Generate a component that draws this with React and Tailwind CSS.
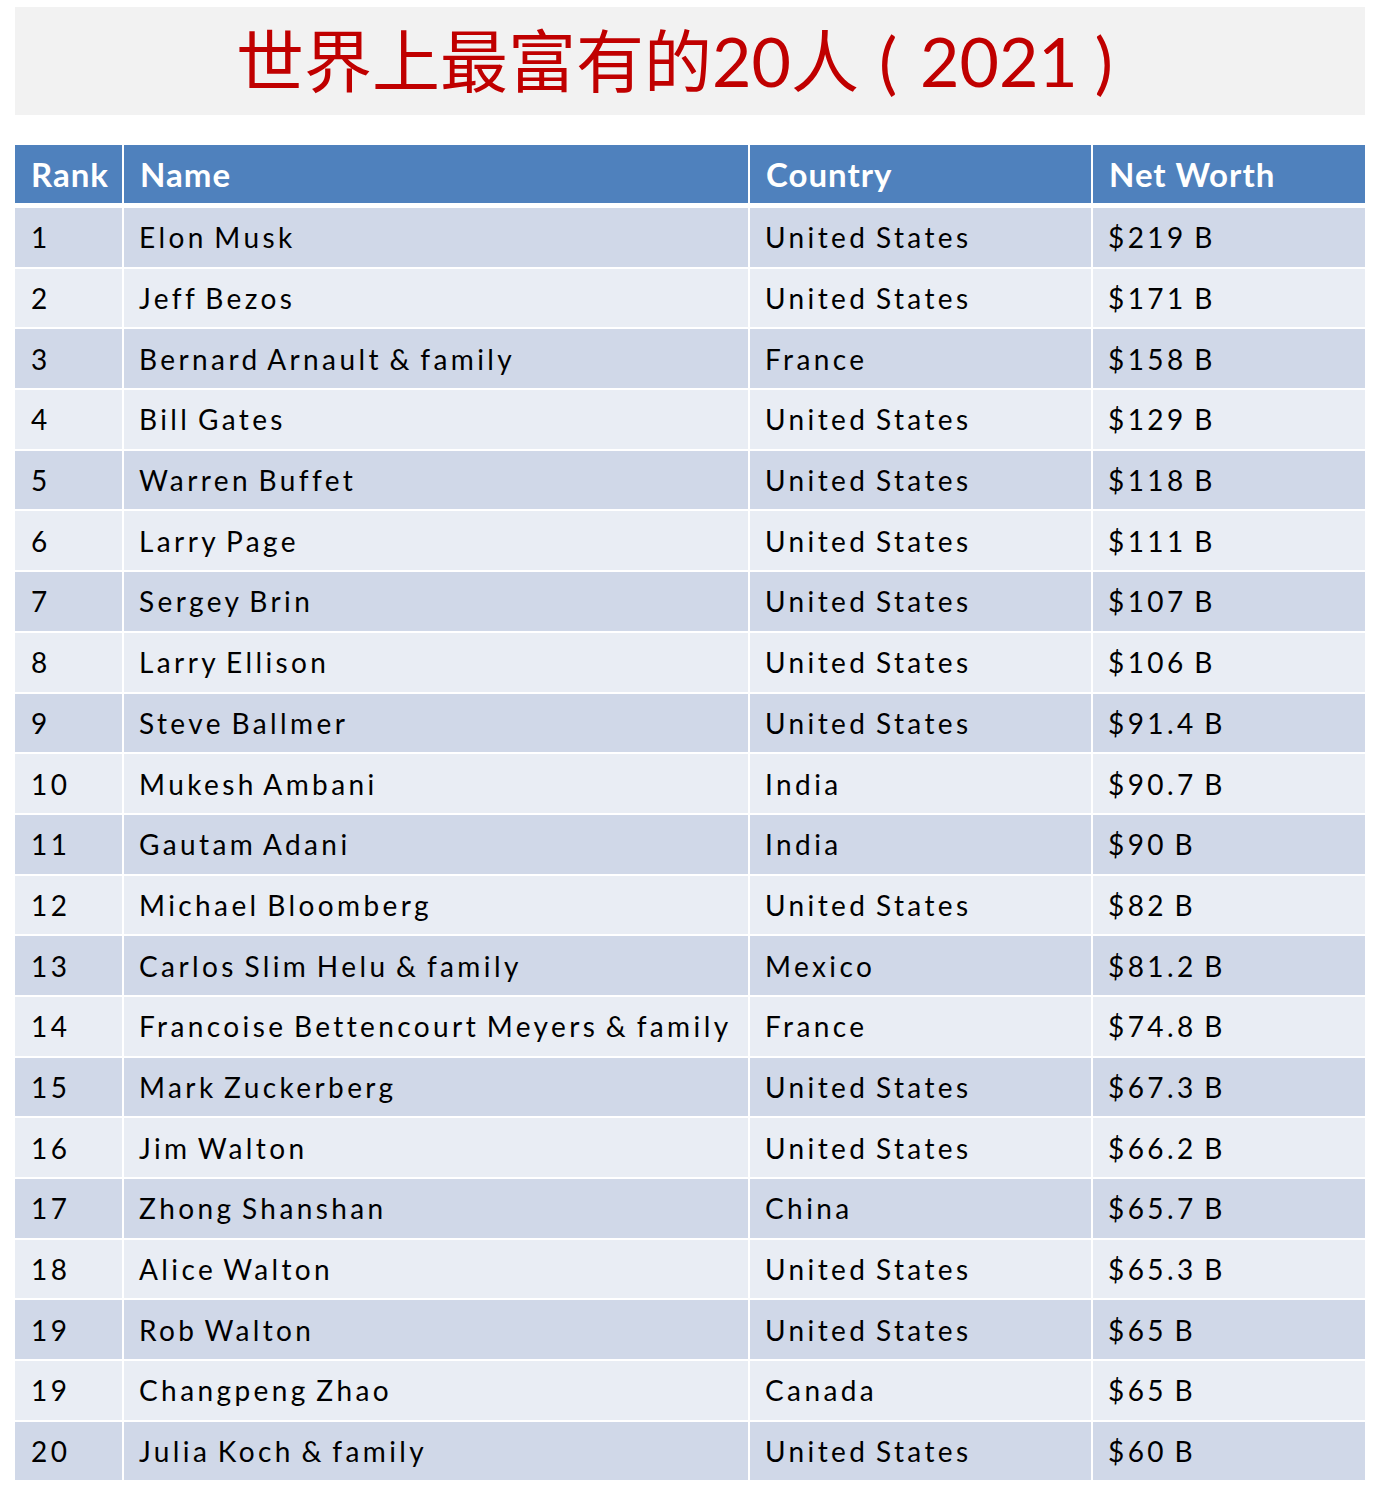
import React from "react";

const rows = [
  ["1", "Elon Musk", "United States", "$219 B"],
  ["2", "Jeff Bezos", "United States", "$171 B"],
  ["3", "Bernard Arnault & family", "France", "$158 B"],
  ["4", "Bill Gates", "United States", "$129 B"],
  ["5", "Warren Buffet", "United States", "$118 B"],
  ["6", "Larry Page", "United States", "$111 B"],
  ["7", "Sergey Brin", "United States", "$107 B"],
  ["8", "Larry Ellison", "United States", "$106 B"],
  ["9", "Steve Ballmer", "United States", "$91.4 B"],
  ["10", "Mukesh Ambani", "India", "$90.7 B"],
  ["11", "Gautam Adani", "India", "$90 B"],
  ["12", "Michael Bloomberg", "United States", "$82 B"],
  ["13", "Carlos Slim Helu & family", "Mexico", "$81.2 B"],
  ["14", "Francoise Bettencourt Meyers & family", "France", "$74.8 B"],
  ["15", "Mark Zuckerberg", "United States", "$67.3 B"],
  ["16", "Jim Walton", "United States", "$66.2 B"],
  ["17", "Zhong Shanshan", "China", "$65.7 B"],
  ["18", "Alice Walton", "United States", "$65.3 B"],
  ["19", "Rob Walton", "United States", "$65 B"],
  ["19", "Changpeng Zhao", "Canada", "$65 B"],
  ["20", "Julia Koch & family", "United States", "$60 B"],
];

const cols = "grid grid-cols-[107px_624px_341px_272px] gap-x-[2px]";

export default function App() {
  return (
    <div className="w-[1380px] h-[1498px] bg-white pt-[7px] px-[15px] font-['Lato','Noto_Sans_CJK_SC',sans-serif]">
      {/* Title */}
      <div className="h-[108px] bg-[#f2f2f2] flex items-center pl-[221px]">
        <h1 className="text-[#c00000] text-[68px] leading-none font-normal whitespace-nowrap">
          世界上最富有的20人
          <span className="ml-[20px]">(</span>
          <span className="ml-[23px]">2021</span>
          <span className="ml-[17px]">)</span>
        </h1>
      </div>

      {/* Table */}
      <div className="mt-[30px]">
        <div className={`${cols} h-[58px] mb-[5px]`}>
          {["Rank", "Name", "Country", "Net Worth"].map((h) => (
            <div key={h} className="bg-[#4f81bd] text-white font-bold text-[33px] tracking-[1px] flex items-center pl-[16px] pt-[2px]">
              {h}
            </div>
          ))}
        </div>
        <div className="flex flex-col gap-y-[2px]">
          {rows.map((r, i) => (
            <div key={i} className={`${cols} h-[58.7px]`}>
              {r.map((c, j) => (
                <div
                  key={j}
                  className={`${i % 2 === 0 ? "bg-[#d0d8e8]" : "bg-[#e9edf4]"} text-black text-[28px] tracking-[3.4px] [word-spacing:-3px] flex items-center whitespace-nowrap ${j === 0 ? "pl-[16px]" : "pl-[15px]"}`}
                >
                  {c}
                </div>
              ))}
            </div>
          ))}
        </div>
      </div>
    </div>
  );
}
